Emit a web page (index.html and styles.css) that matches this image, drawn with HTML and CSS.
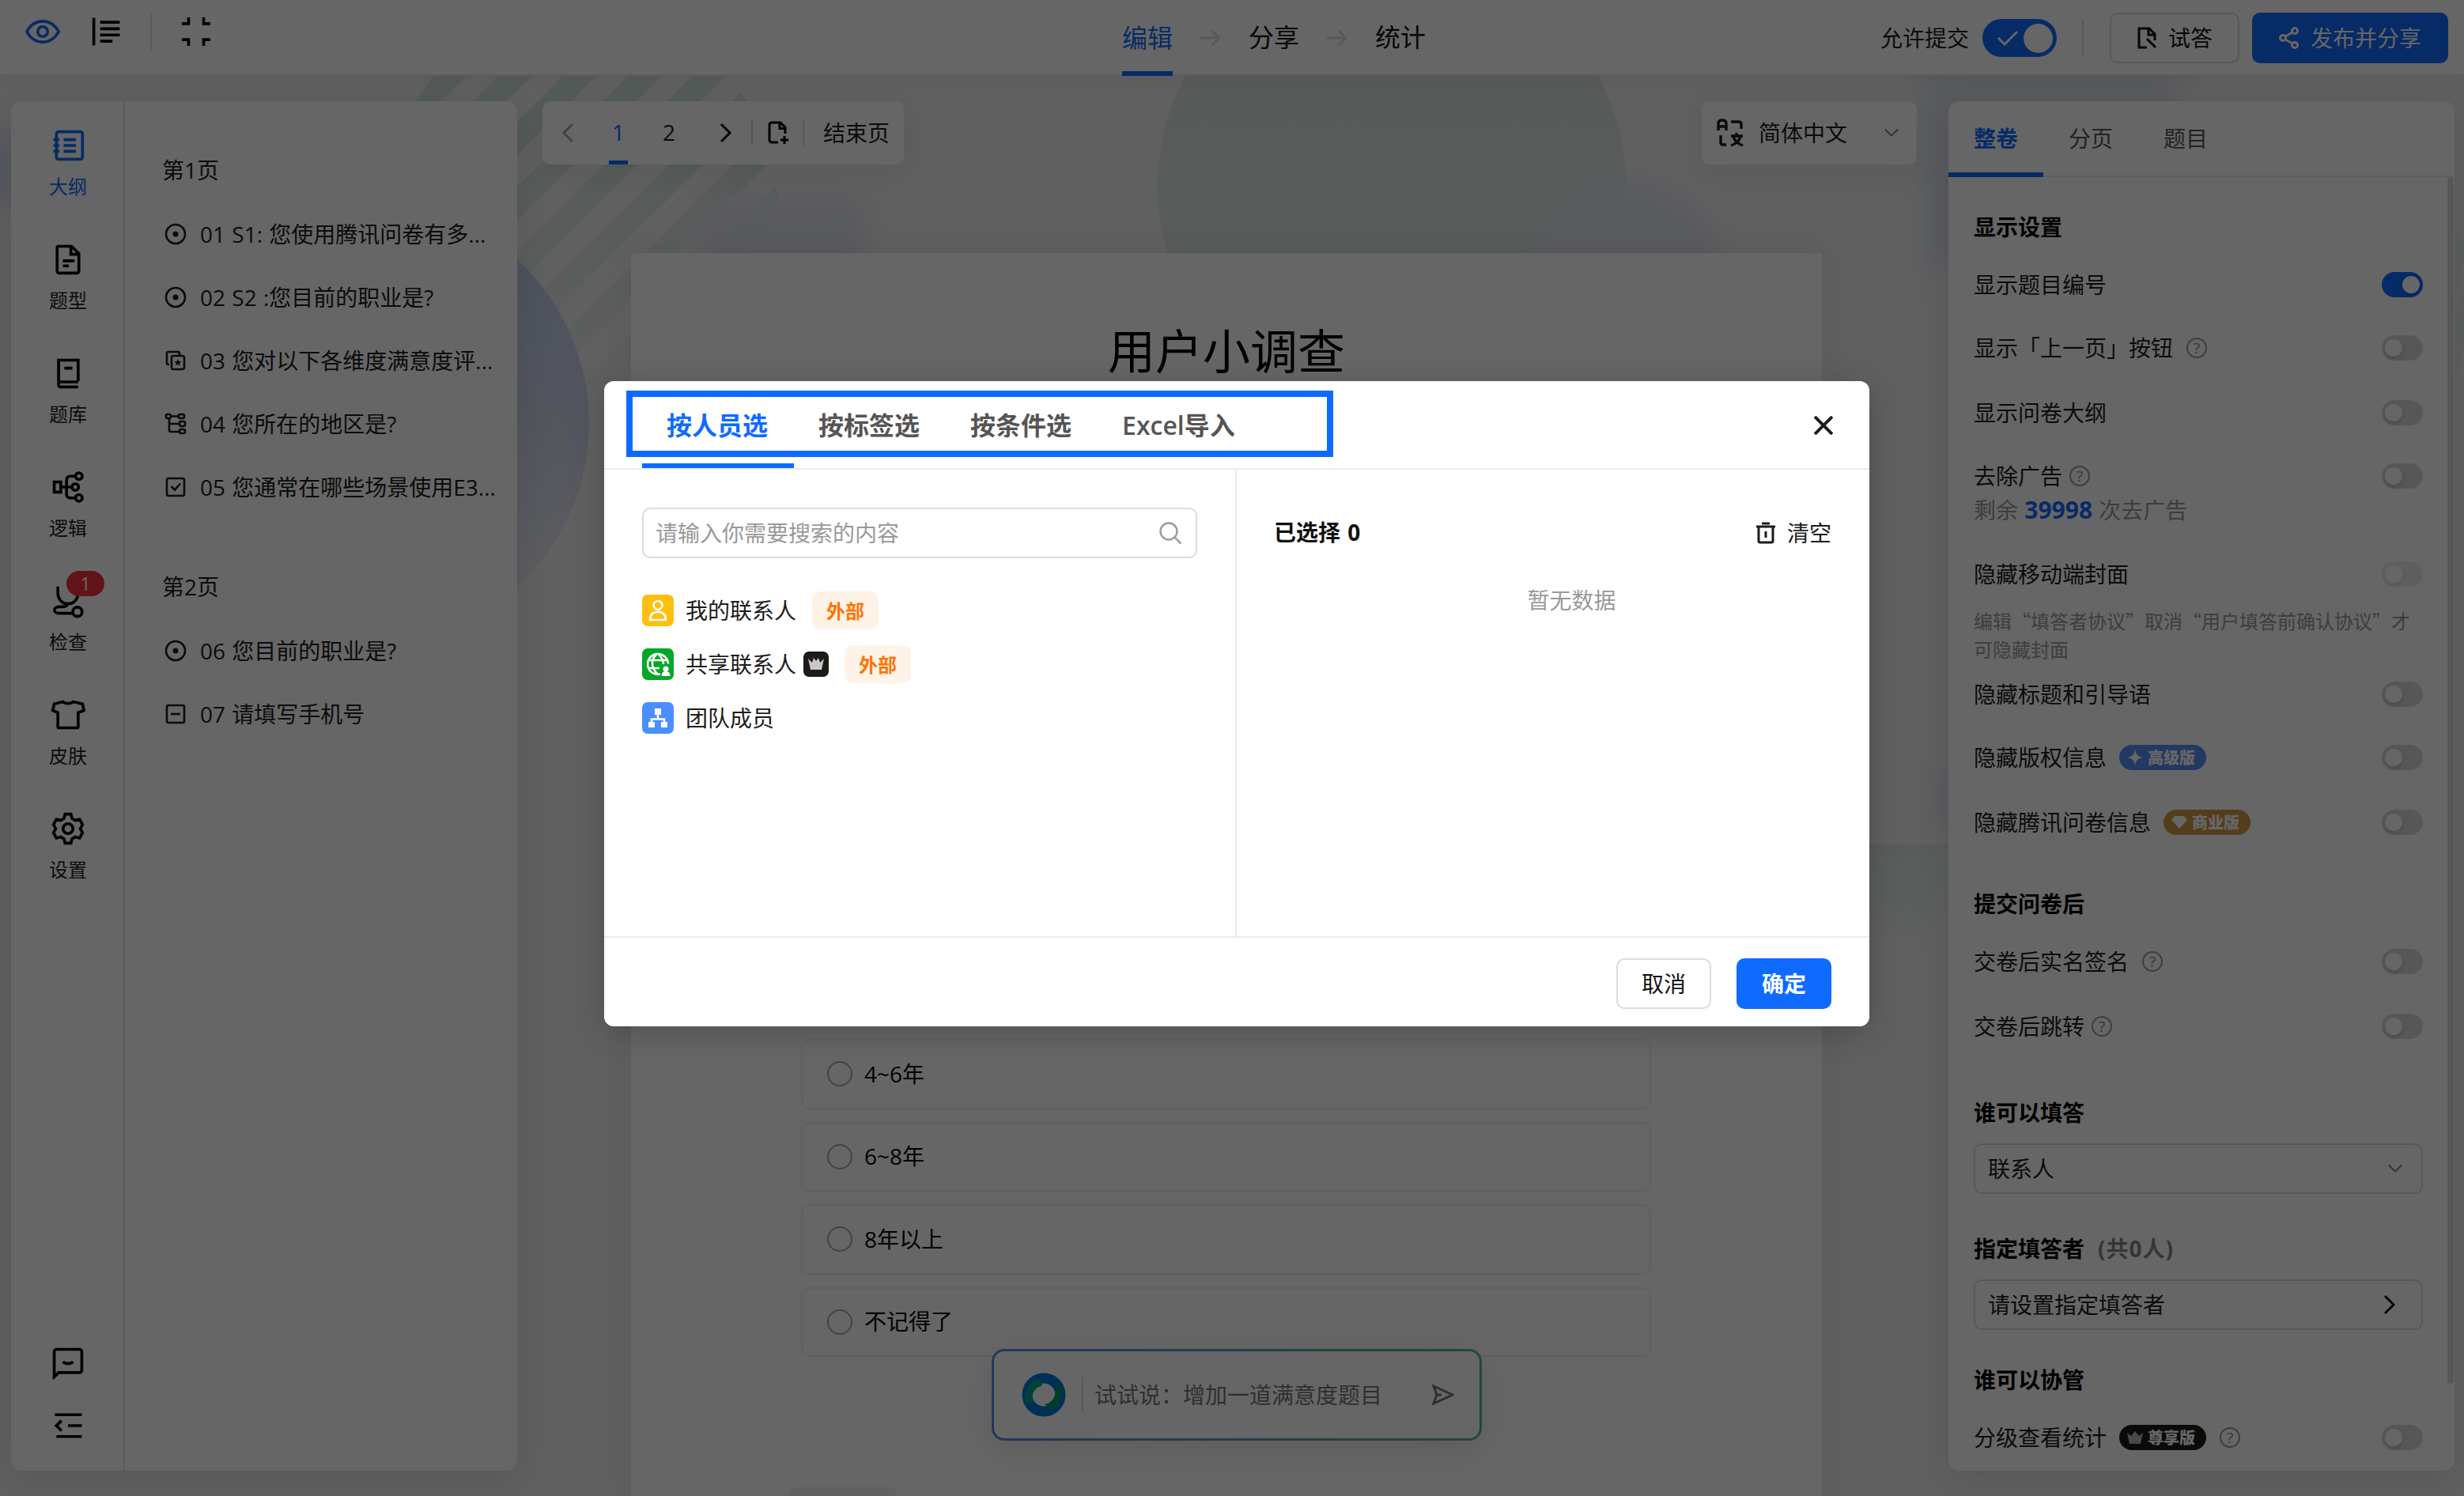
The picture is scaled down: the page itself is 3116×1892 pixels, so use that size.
FILE: index.html
```html
<!DOCTYPE html>
<html lang="zh-CN">
<head>
    <meta charset="UTF-8">
    <meta name="viewport" content="width=device-width, initial-scale=1.0">
    <title>用户小调查</title>
    <link rel="stylesheet" href="styles.css">
</head>
<body>
    <svg class="backdrop" viewBox="0 0 3116 1892">
        <defs>
            <pattern id="stripes" width="58" height="58" patternUnits="userSpaceOnUse" patternTransform="translate(630 96) rotate(45)">
                <rect width="30" height="58" fill="#cfe2da"/>
            </pattern>
            <linearGradient id="fade" x1="0" y1="0" x2="0" y2="1">
                <stop offset="0" stop-color="#fff"/>
                <stop offset="0.35" stop-color="#fff" stop-opacity="0.9"/>
                <stop offset="1" stop-color="#fff" stop-opacity="0"/>
            </linearGradient>
            <mask id="fade-mask"><rect x="450" y="0" width="560" height="520" fill="url(#fade)"/></mask>
            <linearGradient id="blue" x1="0" y1="0" x2="0" y2="1">
                <stop offset="0" stop-color="#b9cbef"/>
                <stop offset="0.5" stop-color="#d0d6e8"/>
                <stop offset="1" stop-color="#ebeef3"/>
            </linearGradient>
            <linearGradient id="green" x1="0" y1="0" x2="0" y2="1">
                <stop offset="0" stop-color="#d3e2db"/>
                <stop offset="1" stop-color="#e2e7ea"/>
            </linearGradient>
            <linearGradient id="green-fade" x1="0" y1="0" x2="0" y2="1">
                <stop offset="0" stop-color="#dbe7e6"/>
                <stop offset="1" stop-color="#f0f0f0"/>
            </linearGradient>
            <filter id="soft" x="-50%" y="-50%" width="200%" height="200%"><feGaussianBlur stdDeviation="16"/></filter>
        </defs>
        <circle cx="735" cy="260" r="248" fill="url(#stripes)" mask="url(#fade-mask)"/>
        <circle cx="464" cy="535" r="281" fill="url(#blue)"/>
        <circle cx="1760" cy="235" r="296" fill="url(#green)"/>
        <rect x="880" y="248" width="215" height="110" fill="#dce0ea" filter="url(#soft)" opacity="0.85"/>
        <circle cx="2060" cy="350" r="120" fill="#dfe3ee" filter="url(#soft)"/>
        <rect x="2430" y="40" width="320" height="300" fill="#dce1eb" filter="url(#soft)"/>
        <rect x="-60" y="170" width="90" height="90" fill="#d3dcf0" filter="url(#soft)"/>
        <circle cx="2480" cy="1010" r="40" fill="#dfe2f0" filter="url(#soft)"/>
        <rect x="2340" y="1068" width="200" height="136" fill="url(#green-fade)"/>
        <path d="M3104 380V290l12 10v30zM3104 400l12-30v70l-12 40z" fill="#e2ece8"/>
    </svg>

    <header class="topbar">
        <div class="topbar-left">
            <svg class="icon blue" viewBox="0 0 24 24"><path d="M1 12C3.600 7.200 7.500 4.800 12 4.800S20.400 7.200 23 12C20.400 16.800 16.500 19.200 12 19.200S3.600 16.800 1 12Z"/><circle cx="12" cy="12" r="3.400"/></svg>
            <svg class="icon outline-icon" viewBox="0 0 24 24"><path d="M3.600 2.500v19M8 5.500h13.500M8 10h13.500M8 14.300h13.500M8 18.600h8.500"/></svg>
            <span class="divider"></span>
            <svg class="icon shrink-icon" viewBox="0 0 24 24"><path d="M2.200 6.500h4.600V2.200M21.800 6.500h-4.600V2.200M2.200 17.500h4.600v4.300M21.800 17.500h-4.600v4.300"/></svg>
        </div>
        <nav class="steps">
            <a class="step active">编辑</a>
            <svg class="step-arrow" viewBox="0 0 26 24"><path d="M0 12h24M15 3l9 9-9 9"/></svg>
            <a class="step">分享</a>
            <svg class="step-arrow" viewBox="0 0 26 24"><path d="M0 12h24M15 3l9 9-9 9"/></svg>
            <a class="step">统计</a>
        </nav>
        <div class="topbar-right">
            <span>允许提交</span>
            <span class="switch-lg"><svg viewBox="0 0 28 20"><path d="M2 10l8 8L26 2"/></svg><i></i></span>
            <span class="divider"></span>
            <button class="btn"><svg viewBox="0 0 26 28"><path d="M13 26H3V2h13l7 7v8M15 3v7h7M13 15l11 11"/></svg>试答</button>
            <button class="btn primary publish"><svg viewBox="0 0 26 28"><circle cx="5" cy="14" r="3.500"/><circle cx="20" cy="5" r="3.500"/><circle cx="20" cy="23" r="3.500"/><path d="M8 12l9-5M8 16l9 5"/></svg>发布并分享</button>
        </div>
    </header>

    <main class="workspace">
        <aside class="panel left-panel">
            <nav class="side-nav">
                <a class="nav-item active"><svg class="icon" viewBox="0 0 24 24"><rect x="4" y="2.500" width="18" height="19" rx="1.500"/><path d="M9 8h8.500M9 12h8.500M9 16h8.500M2 8h4M2 12h4M2 16h4"/></svg>大纲</a>
                <a class="nav-item"><svg class="icon" viewBox="0 0 24 24"><path d="M5 3h9.500l5 5v12a1.500 1.500 0 0 1-1.500 1.500H6A1.500 1.500 0 0 1 4.500 20V3.500zM14 3v5.500h5.500M8.500 13h8M8.500 16.500h4"/></svg>题型</a>
                <a class="nav-item"><svg class="icon" viewBox="0 0 24 24"><path d="M19 17.500V3H5.500v17a1.500 1.500 0 0 0 1.500 1.500h12M5.500 18H19M9.500 8.500h5.500"/></svg>题库</a>
                <a class="nav-item"><svg class="icon" viewBox="0 0 24 24"><rect x="2.500" y="8.500" width="4.500" height="7"/><circle cx="19.500" cy="4.500" r="2.300"/><circle cx="17" cy="12" r="2.300"/><circle cx="19.500" cy="19.500" r="2.300"/><path d="M7 12h8M17.500 4.500h-4a2.500 2.500 0 0 0-2.500 2.500v10a2.500 2.500 0 0 0 2.500 2.500h4"/></svg>逻辑</a>
                <a class="nav-item"><svg class="icon" viewBox="0 0 24 24"><path d="M5 2v4c0 5 3 8 7 8s7-3 7-8V2M12 14c-1 2-2 2-6 2-4.500 0-4.500 4.500 0 4.500h9"/><circle cx="18.500" cy="19.500" r="3.200"/></svg><b class="badge">1</b>检查</a>
                <a class="nav-item"><svg class="icon" viewBox="0 0 24 24"><path d="M8.500 3c1.500 1.500 5.500 1.500 7 0l6.500 1.500 1 4.500-4 1.500v9.500a1 1 0 0 1-1 1h-12a1 1 0 0 1-1-1v-9.500L1.500 9l1-4.500z"/></svg>皮肤</a>
                <a class="nav-item"><svg class="icon" viewBox="0 0 24 24"><path d="M10 2h4l.8 3 2.200 1.300 3-.8 2 3.700-1.500 2.800 1.500 2.800-2 3.700-3-.8-2.200 1.300-.8 3h-4l-.8-3L7 17.700l-3 .8-2-3.700L3.500 12 2 9.200l2-3.700 3 .8L9.200 5z"/><circle cx="12" cy="12" r="3.400"/></svg>设置</a>
                <div class="nav-bottom">
                    <svg class="icon" viewBox="0 0 24 24"><path d="M2.500 22V4.500A1.500 1.500 0 0 1 4 3h16a1.500 1.500 0 0 1 1.500 1.500v13A1.500 1.500 0 0 1 20 19H5.500zM8.500 11.500c1.500 1.800 5.500 1.800 7 0"/></svg>
                    <svg class="icon" viewBox="0 0 24 24"><path d="M3 4.500h18.500M12 12h9.500M4 19.500h17.500M7.500 8.500L4 12l3.500 3.500"/></svg>
                </div>
            </nav>
            <section class="outline">
                <h3>第1页</h3>
                <p><svg class="q-icon" viewBox="0 0 28 28"><circle cx="14" cy="14" r="12"/><circle class="dot" cx="14" cy="14" r="3.500"/></svg>01 S1: 您使用腾讯问卷有多...</p>
                <p><svg class="q-icon" viewBox="0 0 28 28"><circle cx="14" cy="14" r="12"/><circle class="dot" cx="14" cy="14" r="3.500"/></svg>02 S2 :您目前的职业是?</p>
                <p><svg class="q-icon" viewBox="0 0 28 28"><path d="M6 19H5a2 2 0 0 1-2-2V5a2 2 0 0 1 2-2h12a2 2 0 0 1 2 2v2"/><rect x="9" y="8" width="16" height="17" rx="2.500"/><path class="dot" d="M17 12l1.400 3h3l-2.300 2.200.8 3.200-2.900-1.700-2.900 1.700.8-3.200-2.300-2.200h3z"/></svg>03 您对以下各维度满意度评...</p>
                <p><svg class="q-icon" viewBox="0 0 28 28"><rect x="2" y="2" width="6" height="5" rx="2"/><rect x="18" y="2" width="7" height="5" rx="2"/><rect x="19" y="11" width="7" height="6" rx="2"/><rect x="19" y="21" width="7" height="5" rx="2"/><path d="M8 4.500h10M6 7v15a2 2 0 0 0 2 2h11M6 14h13"/></svg>04 您所在的地区是?</p>
                <p><svg class="q-icon" viewBox="0 0 28 28"><rect x="3" y="3" width="22" height="22" rx="2"/><path d="M8.500 13l4.500 4.500 7-8"/></svg>05 您通常在哪些场景使用E3...</p>
                <h3 class="page-two">第2页</h3>
                <p><svg class="q-icon" viewBox="0 0 28 28"><circle cx="14" cy="14" r="12"/><circle class="dot" cx="14" cy="14" r="3.500"/></svg>06 您目前的职业是?</p>
                <p><svg class="q-icon" viewBox="0 0 28 28"><rect x="3" y="3" width="22" height="22" rx="2"/><path d="M8 14h12"/></svg>07 请填写手机号</p>
            </section>
        </aside>

        <div class="editor">
            <div class="toolbar">
                <div class="pager">
                    <svg class="chev muted" viewBox="0 0 16 26"><path d="M14 2L3 13l11 11"/></svg>
                    <span class="page current">1</span>
                    <span class="page">2</span>
                    <svg class="chev next" viewBox="0 0 16 26"><path d="M2 2l11 11L2 24"/></svg>
                    <span class="divider"></span>
                    <svg class="add-page" viewBox="0 0 28 30"><path d="M14 27H6a3 3 0 0 1-3-3V5a3 3 0 0 1 3-3h11l6 6v8M16 3v6.500h6M22 19v10M17 24h10"/></svg>
                    <span class="divider"></span>
                    <span class="end-page">结束页</span>
                </div>
                <div class="lang">
                    <svg class="lang-icon" viewBox="0 0 34 36"><path d="M2 15V6q0-4 5-4t5 4v9M2 10h10M18 4h10q3 0 3 3v6M5 21v9q0 3 3 3h4M18 22h15M25 18v4M30 22c-1 6-6 10-12 12M21 22c1 6 6 10 12 12"/></svg>
                    <span>简体中文</span>
                    <svg class="down" viewBox="0 0 20 12"><path d="M1 1l9 9 9-9"/></svg>
                </div>
            </div>
            <article class="paper">
                <h1>用户小调查</h1>
                <div class="options">
                    <label class="option"><i class="radio"></i>4~6年</label>
                    <label class="option"><i class="radio"></i>6~8年</label>
                    <label class="option"><i class="radio"></i>8年以上</label>
                    <label class="option"><i class="radio"></i>不记得了</label>
                </div>
                <div class="stub"></div>
            </article>
        </div>

        <aside class="panel right-panel">
            <nav class="tabs">
                <a class="active">整卷</a>
                <a>分页</a>
                <a>题目</a>
            </nav>
            <div class="settings">
                <h4 class="first">显示设置</h4>
                <div class="row tight">显示题目编号<i class="switch on"></i></div>
                <div class="row">显示「上一页」按钮<b class="help far">?</b><i class="switch"></i></div>
                <div class="row loose">显示问卷大纲<i class="switch"></i></div>
                <div class="row">去除广告<b class="help">?</b><i class="switch"></i></div>
                <p class="remain">剩余 <b>39998</b> 次去广告</p>
                <div class="row">隐藏移动端封面<i class="switch disabled"></i></div>
                <p class="hint">编辑“填答者协议”取消“用户填答前确认协议”才可隐藏封面</p>
                <div class="row after-hint">隐藏标题和引导语<i class="switch"></i></div>
                <div class="row">隐藏版权信息<span class="pill pro"><svg viewBox="0 0 20 20"><path d="M10 0q1 9 10 10-9 1-10 10Q9 11 0 10 9 9 10 0Z"/></svg>高级版</span><i class="switch"></i></div>
                <div class="row loose">隐藏腾讯问卷信息<span class="pill biz"><svg viewBox="0 0 20 20"><path d="M4 2h12l4 5-10 11L0 7z"/></svg>商业版</span><i class="switch"></i></div>
                <h4 class="after-submit">提交问卷后</h4>
                <div class="row tight">交卷后实名签名<b class="help wide">?</b><i class="switch"></i></div>
                <div class="row loose">交卷后跳转<b class="help">?</b><i class="switch"></i></div>
                <h4 class="who-fill">谁可以填答</h4>
                <div class="field">联系人<svg class="down" viewBox="0 0 20 12"><path d="M1 1l9 9 9-9"/></svg></div>
                <h4 class="assigned">指定填答者<small>(共0人)</small></h4>
                <div class="field">请设置指定填答者<svg class="chev" viewBox="0 0 16 26"><path d="M2 2l11 11L2 24"/></svg></div>
                <h4 class="who-manage">谁可以协管</h4>
                <div class="row tight">分级查看统计<span class="pill vip"><svg viewBox="0 0 20 20"><path d="M0 4l5 4 5-6 5 6 5-4-3 14H3z"/></svg>尊享版</span><b class="help wide">?</b><i class="switch"></i></div>
            </div>
            <span class="scrollbar"></span>
        </aside>
    </main>

    <div class="assistant">
        <svg class="assistant-logo" viewBox="0 0 56 56">
            <circle cx="28" cy="28" r="21" stroke="#0078d8"/>
            <path d="M10 38A20 20 0 0 1 25 12" stroke="#00a982" stroke-width="9"/>
            <path d="M46 18A20 20 0 0 1 31 44" stroke="#00966e" stroke-width="9"/>
        </svg>
        <span class="divider"></span>
        <span class="assistant-text">试试说：增加一道满意度题目</span>
        <svg class="send" viewBox="0 0 28 26"><path d="M2 2l24 11L2 24l4-11zM6 13h6"/></svg>
    </div>

    <div class="mask">
        <div class="modal">
            <div class="modal-head">
                <nav class="modal-tabs">
                    <a class="active">按人员选</a>
                    <a>按标签选</a>
                    <a>按条件选</a>
                    <a>Excel导入</a>
                </nav>
                <span class="highlight"></span>
                <svg class="close" viewBox="0 0 24 24"><path d="M1 1l22 22M23 1L1 23"/></svg>
            </div>
            <div class="modal-body">
                <section class="picker">
                    <div class="search">请输入你需要搜索的内容<svg viewBox="0 0 28 28"><circle cx="12" cy="12" r="10.500"/><path d="M19.500 19.500l8 8"/></svg></div>
                    <ul>
                        <li><svg class="tile yellow" viewBox="0 0 40 40"><circle cx="20" cy="13.500" r="5.500"/><path d="M10 32c0-7 4-10 10-10s10 3 10 10z"/></svg>我的联系人<span class="tag">外部</span></li>
                        <li><svg class="tile green" viewBox="0 0 40 40"><path d="M23 32.600A13 13 0 1 1 33 19.500M18 7.500c-7 7-7 18 2 25M20 7c5 4 7 8 7 13M8 15h23M8 25h14"/><circle class="solid" cx="30" cy="26" r="3.500"/><path class="solid" d="M24.500 35c0-4 2-6 5.500-6s5.500 2 5.500 6z"/></svg>共享联系人<svg class="crown" viewBox="0 0 32 32"><path d="M6 9l5 5 2-6 3 4 3-4 2 6 5-5-3 14H9z"/></svg><span class="tag">外部</span></li>
                        <li><svg class="tile sky" viewBox="0 0 40 40"><path class="solid" d="M16 8h8v8h-8zM8 25h8v7H8zM24 25h8v7h-8z"/><path d="M20 16v5M12 26v-4.500h16V26"/></svg>团队成员</li>
                    </ul>
                </section>
                <section class="selected">
                    <div class="selected-head"><b>已选择 0</b><span class="clear"><svg viewBox="0 0 26 28"><path d="M1 6h24M8 2h10M4 6v18a2 2 0 0 0 2 2h14a2 2 0 0 0 2-2V6M13 12v8"/></svg>清空</span></div>
                    <p class="empty">暂无数据</p>
                </section>
            </div>
            <div class="modal-foot">
                <button class="btn cancel">取消</button>
                <button class="btn primary confirm">确定</button>
            </div>
        </div>
    </div>
</body>
</html>
```
FILE: styles.css
```css
* {
    box-sizing: border-box;
}
body {
    margin: 0;
    width: 3116px;
    height: 1892px;
    overflow: hidden;
    position: relative;
    background-color: #f0f0f0;
    color: #1c1c1c;
    font-family: "Open Sans", "Noto Sans CJK SC", sans-serif;
    font-size: 28px;
    line-height: 39px;
}
h1, h3, h4, p, ul {
    margin: 0;
    padding: 0;
    font-weight: 400;
}
svg {
    flex-shrink: 0;
    fill: none;
    stroke: currentColor;
    stroke-width: 2;
}
i, b {
    font-style: normal;
}
.backdrop {
    position: absolute;
    left: 0;
    top: 0;
    width: 3116px;
    height: 1892px;
    stroke: none;
}
.icon {
    width: 44px;
    height: 44px;
    color: #000;
}
.icon.blue {
    width: 46px;
    color: #0f6bff;
}
.divider {
    width: 2px;
    height: 32px;
    background-color: #dcdcdc;
}

/* top bar */
.topbar {
    position: relative;
    display: flex;
    justify-content: space-between;
    height: 96px;
    background-color: #fff;
    border-bottom: 2px solid #e6e6e6;
    box-shadow: 0 4px 24px rgba(0, 0, 0, 0.06);
}
.topbar-left {
    display: flex;
    align-items: center;
    height: 80px;
    width: 1419px;
    padding-left: 31px;
}
.outline-icon {
    margin-left: 35px;
}
.topbar-left .divider {
    height: 48px;
    margin-left: 34px;
}
.shrink-icon {
    margin-left: 34px;
}
.steps {
    display: flex;
    height: 96px;
    font-size: 32px;
    line-height: 93px;
    color: #111;
}
.step {
    height: 96px;
}
.step.active {
    color: #0f6bff;
    border-bottom: 6px solid #0f6bff;
    line-height: 96px;
}
.step-arrow {
    width: 26px;
    height: 24px;
    margin: 36px 35px 0;
    color: #dcdcdc;
    stroke-width: 3;
}
.topbar-right {
    display: flex;
    align-items: center;
    justify-content: flex-end;
    height: 96px;
    flex: 1;
    padding-right: 20px;
}
.switch-lg {
    display: flex;
    align-items: center;
    justify-content: space-between;
    width: 94px;
    height: 48px;
    margin-left: 17px;
    padding: 0 5px 0 18px;
    border-radius: 24px;
    background-color: #0f6bff;
}
.switch-lg svg {
    width: 28px;
    height: 20px;
    color: #fff;
    stroke-width: 3;
}
.switch-lg i {
    width: 37px;
    height: 37px;
    border-radius: 50%;
    background-color: #fff;
}
.topbar-right .divider {
    height: 48px;
    margin: 0 33px 0 32px;
}
.btn {
    display: flex;
    align-items: center;
    justify-content: center;
    height: 64px;
    padding: 0;
    border: 2px solid #dcdcdc;
    border-radius: 10px;
    background-color: #fff;
    color: #111;
    font: inherit;
}
.btn svg {
    width: 26px;
    height: 28px;
    margin-right: 14px;
    stroke-width: 3;
}
.btn.primary {
    border-color: #0f6bff;
    background-color: #0f6bff;
    color: #fff;
}
.topbar-right .btn {
    width: 164px;
}
.topbar-right .publish {
    width: 248px;
    margin-left: 16px;
}

/* workspace */
.workspace {
    position: relative;
    display: flex;
    height: 1796px;
    padding: 32px 12px 0 14px;
}
.panel {
    height: 1732px;
    border-radius: 14px;
    background-color: #fff;
    box-shadow: 0 8px 48px rgba(0, 0, 0, 0.1);
}
.left-panel {
    display: flex;
    width: 640px;
}
.side-nav {
    display: flex;
    flex-direction: column;
    width: 144px;
    padding: 28px 0 0 2px;
    border-right: 2px solid #e4e4e4;
}
.nav-item {
    position: relative;
    display: flex;
    flex-direction: column;
    align-items: center;
    height: 144px;
    padding-top: 6px;
    font-size: 24px;
    line-height: 36px;
}
.nav-item .icon {
    margin-bottom: 12px;
}
.nav-item.active, .nav-item.active .icon {
    color: #0f6bff;
}
.badge {
    position: absolute;
    left: 68px;
    top: -10px;
    width: 48px;
    height: 32px;
    border-radius: 16px;
    background-color: #f5303a;
    color: #fff;
    font-size: 24px;
    line-height: 32px;
    font-weight: 400;
    text-align: center;
}
.nav-bottom {
    display: flex;
    flex-direction: column;
    align-items: center;
    gap: 36px;
    margin-top: auto;
    margin-bottom: 35px;
}
.outline {
    padding-left: 47px;
    white-space: nowrap;
}
.outline h3 {
    height: 80px;
    margin-top: 48px;
    font-size: 28px;
    line-height: 79px;
}
.outline h3.page-two {
    margin-top: 47px;
}
.outline p {
    display: flex;
    align-items: center;
    height: 80px;
    word-spacing: 1px;
}
.q-icon {
    width: 28px;
    height: 28px;
    margin: 0 17px 0 3px;
    stroke-width: 2.600;
}
.q-icon .dot {
    fill: currentColor;
    stroke: none;
}

/* editor */
.editor {
    width: 1738px;
    margin: 0 40px 0 32px;
}
.toolbar {
    display: flex;
    justify-content: space-between;
    height: 80px;
    margin-bottom: 112px;
}
.pager, .lang {
    display: flex;
    align-items: center;
    border-radius: 10px;
    background-color: #fff;
    box-shadow: 0 8px 40px rgba(0, 0, 0, 0.08);
}
.pager {
    width: 457px;
    padding-left: 24px;
}
.chev {
    width: 16px;
    height: 26px;
    color: #111;
    stroke-width: 3;
}
.chev.muted {
    color: #a8a8a8;
}
.chev.next {
    margin: 0 24px 0 52px;
}
.page {
    width: 24px;
    height: 80px;
    line-height: 79px;
    text-align: center;
}
.page.current {
    margin: 0 40px 0 44px;
    color: #0f6bff;
    border-bottom: 5px solid #0f6bff;
}
.add-page {
    width: 28px;
    height: 30px;
    margin: 0 17px 0 18px;
    color: #000;
    stroke-width: 3;
}
.end-page {
    margin-left: 24px;
}
.lang {
    width: 272px;
    padding: 0 23px 0 18px;
}
.lang-icon {
    width: 36px;
    height: 36px;
    margin-right: 18px;
    stroke-width: 3.400;
}
.down {
    width: 18px;
    height: 12px;
    margin-left: auto;
    color: #777;
}
.paper {
    display: flex;
    flex-direction: column;
    width: 1506px;
    height: 1572px;
    margin-left: 112px;
    background-color: #fff;
    box-shadow: 0 0 48px rgba(0, 0, 0, 0.07);
}
.paper h1 {
    margin-top: 82px;
    font-size: 60px;
    line-height: 84px;
    color: #000;
    text-align: center;
}
.options {
    display: flex;
    flex-direction: column;
    gap: 16px;
    margin: 828px 216px 0 215px;
}
.option {
    display: flex;
    align-items: center;
    height: 88.500px;
    padding-left: 31px;
    border: 2px solid #f0f0f0;
    border-radius: 10px;
    color: #000;
}
.radio {
    width: 32px;
    height: 32px;
    margin-right: 15px;
    border: 2px solid #a8a8a8;
    border-radius: 50%;
}
.stub {
    width: 138px;
    height: 20px;
    margin: 165px 0 0 199px;
    border-radius: 10px 10px 0 0;
    background-color: #f2f2f2;
}

/* settings panel */
.right-panel {
    position: relative;
    width: 640px;
}
.tabs {
    display: flex;
    height: 96px;
    border-bottom: 2px solid #ececec;
    line-height: 95px;
    color: #555;
}
.tabs a {
    width: 120px;
    height: 96px;
    text-align: center;
}
.tabs a.active {
    color: #0f6bff;
    font-weight: 700;
    border-bottom: 6px solid #0f6bff;
}
.settings {
    padding: 0 40px 0 32px;
}
.settings h4 {
    height: 40px;
    font-size: 28px;
    font-weight: 700;
    color: #000;
}
.settings h4.first {
    margin-top: 44px;
}
.settings h4.after-submit {
    margin-top: 64px;
}
.settings h4.who-fill {
    margin: 70px 0 18px;
}
.settings h4.assigned {
    margin: 50px 0 18px;
}
.settings h4.who-manage {
    margin-top: 44px;
}
.settings small {
    margin-left: 17px;
    font-size: 28px;
    color: #888;
    letter-spacing: 1px;
}
.row {
    display: flex;
    align-items: center;
    height: 40px;
    margin-top: 40px;
}
.row.tight {
    margin-top: 32px;
}
.row.loose {
    margin-top: 42px;
}
.row.after-hint {
    margin-top: 19px;
}
.switch {
    display: flex;
    align-items: center;
    width: 52px;
    height: 32px;
    margin-left: auto;
    padding: 0 4px;
    border-radius: 16px;
    background-color: #dadada;
}
.switch::before {
    content: "";
    width: 22px;
    height: 22px;
    border-radius: 50%;
    background-color: #fff;
    box-shadow: 0 3px 6px rgba(0, 0, 0, 0.15);
}
.switch.on {
    justify-content: flex-end;
    background-color: #0f6bff;
}
.switch.disabled {
    opacity: 0.5;
}
.help {
    width: 26px;
    height: 26px;
    margin-left: 9px;
    border: 2px solid #999;
    border-radius: 50%;
    color: #888;
    font-size: 19px;
    line-height: 22px;
    font-weight: 400;
    text-align: center;
}
.help.far, .help.wide {
    margin-left: 17px;
}
.remain {
    height: 40px;
    margin-top: 4px;
    color: #999;
    word-spacing: 1px;
}
.remain b {
    font-size: 30px;
    line-height: 30px;
    color: #0f6bff;
}
.hint {
    margin-top: 21px;
    font-family: "Noto Sans CJK SC", sans-serif;
    font-size: 24px;
    line-height: 36px;
    color: #999;
}
.pill {
    display: flex;
    align-items: center;
    width: 110px;
    height: 32px;
    margin-left: 16px;
    padding-left: 10px;
    border-radius: 16px;
    color: #fff;
    font-size: 20px;
    font-weight: 900;
}
.pill svg {
    width: 20px;
    height: 20px;
    margin-right: 6px;
    fill: currentColor;
    stroke: none;
}
.pill.pro {
    background-color: #558ff5;
}
.pill.biz {
    background-color: #cf9a45;
}
.pill.vip {
    background-color: #1d1a18;
}
.pill.vip svg {
    fill: #b5b5b5;
}
.field {
    display: flex;
    align-items: center;
    justify-content: space-between;
    height: 64px;
    padding: 0 24px 0 16px;
    border: 2px solid #dcdcdc;
    border-radius: 10px;
}
.field .chev {
    margin-right: 8px;
}
.scrollbar {
    position: absolute;
    right: 1px;
    top: 96px;
    width: 8px;
    height: 1526px;
    border-radius: 4px;
    background-color: #dadada;
}

/* assistant bar */
.assistant {
    position: absolute;
    left: 1254px;
    top: 1706px;
    display: flex;
    align-items: center;
    width: 620px;
    height: 116px;
    padding: 0 32px 0 35px;
    border: 3px solid transparent;
    border-radius: 16px;
    background: linear-gradient(#fff, #fff) padding-box, linear-gradient(90deg, #5b86e8, #4fb98a) border-box;
    box-shadow: 0 12px 48px rgba(0, 0, 0, 0.1);
    color: #777;
}
.assistant-logo {
    width: 56px;
    height: 56px;
    stroke-width: 13;
}
.assistant .divider {
    height: 44px;
    margin: 0 14px 0 20px;
}
.send {
    width: 28px;
    height: 26px;
    margin-left: auto;
    stroke-width: 3;
}

/* modal */
.mask {
    position: absolute;
    left: 0;
    top: 0;
    width: 3116px;
    height: 1892px;
    padding: 482px 0 0 764px;
    background-color: rgba(0, 0, 0, 0.6);
}
.modal {
    display: flex;
    flex-direction: column;
    width: 1600px;
    height: 816px;
    border-radius: 12px;
    background-color: #fff;
    box-shadow: 0 8px 40px rgba(0, 0, 0, 0.2);
}
.modal-head {
    position: relative;
    display: flex;
    height: 112px;
    padding-left: 48px;
    border-bottom: 2px solid #ebebeb;
}
.modal-tabs {
    display: flex;
}
.modal-tabs a {
    height: 110px;
    padding: 0 33px 0 31px;
    font-size: 32px;
    line-height: 111px;
    font-weight: 600;
    color: #555;
}
.modal-tabs a.active {
    color: #0f6bff;
    font-weight: 700;
    border-bottom: 6px solid #0f6bff;
}
.highlight {
    position: absolute;
    left: 28px;
    top: 12px;
    width: 894px;
    height: 84px;
    border: 8px solid #0f6bff;
}
.close {
    width: 24px;
    height: 24px;
    margin: 44px 46px 0 auto;
    stroke-width: 4;
}
.modal-body {
    display: flex;
    height: 592px;
    border-bottom: 2px solid #ebebeb;
}
.picker {
    width: 800px;
    padding: 48px 48px 0;
    border-right: 2px solid #ebebeb;
}
.search {
    display: flex;
    align-items: center;
    justify-content: space-between;
    height: 64px;
    padding: 0 18px 0 15px;
    border: 2px solid #dcdcdc;
    border-radius: 10px;
    color: #999;
}
.search svg {
    width: 28px;
    height: 28px;
    stroke-width: 2.400;
}
.picker ul {
    margin-top: 32px;
    list-style: none;
}
.picker li {
    display: flex;
    align-items: center;
    height: 68px;
    line-height: 36px;
    padding-bottom: 1px;
}
.tile {
    width: 40px;
    height: 40px;
    margin-right: 15px;
    border-radius: 7px;
    color: #fff;
    stroke-width: 2.600;
}
.tile .solid {
    fill: #fff;
    stroke: none;
}
.tile.yellow {
    background-color: #ffbf0f;
}
.tile.green {
    background-color: #00a826;
}
.tile.sky {
    background-color: #4a8fff;
}
.crown {
    width: 32px;
    height: 32px;
    margin-left: 9px;
    border-radius: 7px;
    background-color: #1d1a18;
    fill: #c8c8c8;
    stroke: none;
}
.tag {
    width: 84px;
    height: 48px;
    margin-left: 20px;
    border-radius: 10px;
    background-color: #fff3e8;
    color: #ff7300;
    font-size: 24px;
    line-height: 49px;
    font-weight: 600;
    text-align: center;
}
.selected {
    flex: 1;
    padding: 60px 48px 0 47px;
}
.selected-head {
    display: flex;
    justify-content: space-between;
    height: 40px;
}
.selected-head b {
    font-weight: 700;
    color: #111;
    word-spacing: 2px;
}
.clear {
    display: flex;
    align-items: center;
}
.clear svg {
    width: 26px;
    height: 28px;
    margin-right: 14px;
    stroke-width: 3;
}
.empty {
    margin-top: 46px;
    padding-left: 48px;
    text-align: center;
    color: #999;
}
.modal-foot {
    display: flex;
    justify-content: flex-end;
    gap: 32px;
    padding: 26px 48px 0;
}
.modal-foot .btn {
    width: 120px;
}
.modal-foot .confirm {
    font-weight: 700;
}
```
